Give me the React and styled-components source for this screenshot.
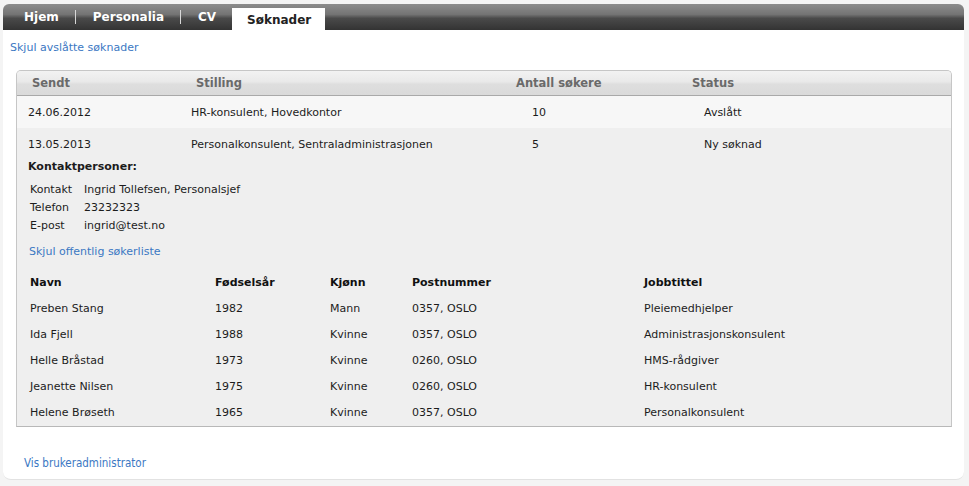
import React from 'react';
import styled, { createGlobalStyle } from 'styled-components';

const GlobalStyle = createGlobalStyle`
  html, body {
    margin: 0;
    padding: 0;
    background: #f4f4f4;
  }
  body {
    font-family: "DejaVu Sans", Verdana, sans-serif;
    font-size: 11px;
    color: #1c1c1c;
  }
`;

const Page = styled.div`
  padding: 4px 5px 5px 3px;
`;

const NavBar = styled.div`
  display: flex;
  align-items: flex-end;
  height: 26px;
  border-radius: 6px 6px 0 0;
  background: linear-gradient(#8c8c8c 0%, #747474 40%, #4a4a4a 55%, #333 100%);
  padding-left: 4px;
`;

const NavItem = styled.div`
  display: flex;
  align-items: center;
  height: ${props => (props.active ? '22px' : '26px')};
  padding: ${props => (props.active ? '1px 14px 0 15px' : '0 16px 0 17px')};
  background: ${props => (props.active ? '#fff' : 'transparent')};
  color: ${props => (props.active ? '#222' : '#fff')};
  font-weight: bold;
  font-size: 12px;
  box-sizing: border-box;
`;

const NavSep = styled.div`
  width: 1px;
  height: 14px;
  margin-bottom: 6px;
  background: #d8d8d8;
`;

const Body = styled.div`
  background: #fff;
  border-radius: 0 0 8px 8px;
  border-bottom: 1px solid #e2e2e2;
  padding: 11px 12px 9px 13px;
  height: 450px;
  box-sizing: border-box;
  display: flex;
  flex-direction: column;
`;

const Link = styled.a`
  display: block;
  color: #3b78c3;
  text-decoration: none;
  line-height: 13px;
  margin-left: ${props => props.indent || 0}px;
  cursor: pointer;
`;

const FooterLink = styled(Link)`
  font-family: "DejaVu Sans Condensed", "DejaVu Sans", sans-serif;
  font-size: 11.5px;
  margin-top: auto;
`;

const Box = styled.div`
  margin-top: 16px;
  border: 1px solid #c6c6c6;
  border-bottom-color: #b8b8b8;
  border-radius: 5px 5px 0 0;
  background: #efefef;
  overflow: hidden;
`;

const HeadRow = styled.div`
  display: grid;
  grid-template-columns: 164px 320px 176px 1fr;
  align-items: center;
  height: 24px;
  padding-left: 15px;
  background: linear-gradient(#f2f2f2 0%, #e9e9e9 45%, #dedede 55%, #dadada 100%);
  border-bottom: 1px solid #a9a9a9;
  color: #6a6a6a;
  font-weight: bold;
  font-size: 11.5px;
`;

const DataRow = styled.div`
  display: grid;
  grid-template-columns: 163px 341px 172px 1fr;
  align-items: center;
  height: 32px;
  padding-left: 11px;
  background: ${props => (props.alt ? '#efefef' : '#f7f7f7')};
`;

const Details = styled.div`
  padding: 0 0 0 11px;
`;

const DetailsTitle = styled.div`
  font-weight: bold;
  line-height: 13px;
`;

const ContactList = styled.div`
  display: grid;
  grid-template-columns: 54px 1fr;
  margin: 8px 0 10px 2px;
  line-height: 18px;
`;

const ApplicantGrid = styled.div`
  display: grid;
  grid-template-columns: 185px 115px 82px 232px 1fr;
  margin: 12px 0 0 2px;
`;

const Cell = styled.div`
  height: 26px;
  line-height: 26px;
  font-weight: ${props => (props.head ? 'bold' : 'normal')};
  color: ${props => (props.head ? '#111' : '#1c1c1c')};
`;

const applications = [
  { sent: '24.06.2012', job: 'HR-konsulent, Hovedkontor', count: '10', status: 'Avslått' },
  { sent: '13.05.2013', job: 'Personalkonsulent, Sentraladministrasjonen', count: '5', status: 'Ny søknad' },
];

const applicants = [
  ['Preben Stang', '1982', 'Mann', '0357, OSLO', 'Pleiemedhjelper'],
  ['Ida Fjell', '1988', 'Kvinne', '0357, OSLO', 'Administrasjonskonsulent'],
  ['Helle Bråstad', '1973', 'Kvinne', '0260, OSLO', 'HMS-rådgiver'],
  ['Jeanette Nilsen', '1975', 'Kvinne', '0260, OSLO', 'HR-konsulent'],
  ['Helene Brøseth', '1965', 'Kvinne', '0357, OSLO', 'Personalkonsulent'],
];

const App = () => {
  return (
    <Page>
      <GlobalStyle />
      <NavBar>
        <NavItem>Hjem</NavItem>
        <NavSep />
        <NavItem>Personalia</NavItem>
        <NavSep />
        <NavItem>CV</NavItem>
        <NavItem active>Søknader</NavItem>
      </NavBar>

      <Body>
        <Link indent={-6}>Skjul avslåtte søknader</Link>

        <Box>
          <HeadRow>
            <div>Sendt</div>
            <div>Stilling</div>
            <div>Antall søkere</div>
            <div>Status</div>
          </HeadRow>
          {applications.map((a, i) => (
            <DataRow key={a.sent} alt={i % 2 === 1}>
              <div>{a.sent}</div>
              <div>{a.job}</div>
              <div>{a.count}</div>
              <div>{a.status}</div>
            </DataRow>
          ))}

          <Details>
            <DetailsTitle>Kontaktpersoner:</DetailsTitle>
            <ContactList>
              <div>Kontakt</div>
              <div>Ingrid Tollefsen, Personalsjef</div>
              <div>Telefon</div>
              <div>23232323</div>
              <div>E-post</div>
              <div>ingrid@test.no</div>
            </ContactList>
            <Link indent={1}>Skjul offentlig søkerliste</Link>

            <ApplicantGrid>
              {['Navn', 'Fødselsår', 'Kjønn', 'Postnummer', 'Jobbtittel'].map(h => (
                <Cell head key={h}>{h}</Cell>
              ))}
              {applicants.map(row =>
                row.map((c, j) => <Cell key={row[0] + j}>{c}</Cell>)
              )}
            </ApplicantGrid>
          </Details>
        </Box>

        <FooterLink indent={8}>Vis brukeradministrator</FooterLink>
      </Body>
    </Page>
  );
};

export default App;
